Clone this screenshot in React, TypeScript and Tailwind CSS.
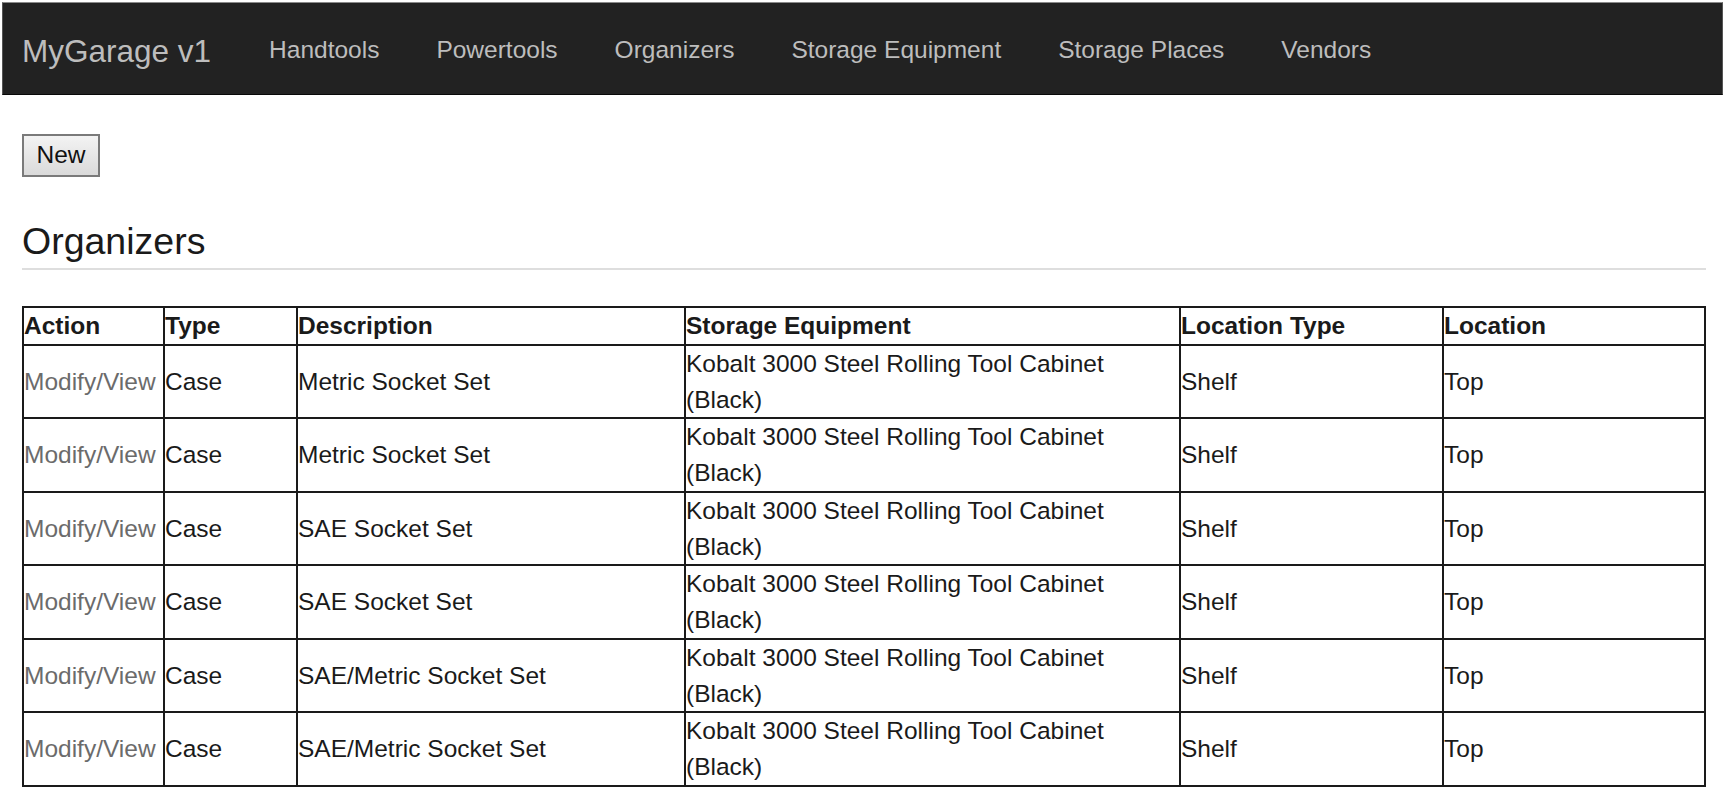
import React from 'react';

const navLinks = ['Handtools', 'Powertools', 'Organizers', 'Storage Equipment', 'Storage Places', 'Vendors'];

const organizers = [
  { type: 'Case', description: 'Metric Socket Set' },
  { type: 'Case', description: 'Metric Socket Set' },
  { type: 'Case', description: 'SAE Socket Set' },
  { type: 'Case', description: 'SAE Socket Set' },
  { type: 'Case', description: 'SAE/Metric Socket Set' },
  { type: 'Case', description: 'SAE/Metric Socket Set' },
];

const App = () => {
  return (
    <div className="min-h-[790px] bg-white pt-[2px] [font-family:'Liberation_Sans',Arial,sans-serif]">
      {/* Top navbar */}
      <nav className="mx-[2px] flex h-[93px] items-center border border-t-[#8a8a8a] border-x-[#555] border-b-[#080808] bg-[#222] pl-[19px] pt-[6px]">
        <a className="text-[31.5px] leading-none text-[#bdbdbd]">MyGarage v1</a>
        <ul className="ml-[58px] flex gap-[57px]">
          {navLinks.map((link) => (
            <li key={link}>
              <a className="text-[24.5px] leading-none text-[#bdbdbd]">{link}</a>
            </li>
          ))}
        </ul>
      </nav>

      <div className="pl-[22px] pr-[19px]">
        <button className="mt-[39px] flex h-[43px] w-[78px] items-center justify-center border-2 border-[#7a7a7a] bg-gradient-to-b from-[#f3f3f3] to-[#dadada] text-[24.5px] text-[#111]">
          New
        </button>

        <h2 className="mt-[44px] text-[37.5px] leading-[41px] text-[#1a1a1a]">Organizers</h2>
        <hr className="mt-[6px] border-t-2 border-[#dedede]" />

        <table className="mt-[36px] w-full table-fixed border-collapse border-2 border-[#1a1a1a] text-[24.5px] leading-[35.75px] text-[#1a1a1a]">
          <colgroup>
            <col className="w-[141px]" />
            <col className="w-[133px]" />
            <col className="w-[388px]" />
            <col className="w-[495px]" />
            <col className="w-[263px]" />
            <col />
          </colgroup>
          <thead>
            <tr>
              <th className="border-2 border-[#1a1a1a] p-0 text-left font-bold">Action</th>
              <th className="border-2 border-[#1a1a1a] p-0 text-left font-bold">Type</th>
              <th className="border-2 border-[#1a1a1a] p-0 text-left font-bold">Description</th>
              <th className="border-2 border-[#1a1a1a] p-0 text-left font-bold">Storage Equipment</th>
              <th className="border-2 border-[#1a1a1a] p-0 text-left font-bold">Location Type</th>
              <th className="border-2 border-[#1a1a1a] p-0 text-left font-bold">Location</th>
            </tr>
          </thead>
          <tbody>
            {organizers.map((row, i) => (
              <tr key={i}>
                <td className="border-2 border-[#1a1a1a] p-0 align-middle whitespace-nowrap">
                  <a className="text-[#6b6b6b]">Modify/View</a>
                </td>
                <td className="border-2 border-[#1a1a1a] p-0 align-middle">{row.type}</td>
                <td className="border-2 border-[#1a1a1a] p-0 align-middle">{row.description}</td>
                <td className="border-2 border-[#1a1a1a] p-0 align-middle">Kobalt 3000 Steel Rolling Tool Cabinet (Black)</td>
                <td className="border-2 border-[#1a1a1a] p-0 align-middle">Shelf</td>
                <td className="border-2 border-[#1a1a1a] p-0 align-middle">Top</td>
              </tr>
            ))}
          </tbody>
        </table>
      </div>
    </div>
  );
};

export default App;
